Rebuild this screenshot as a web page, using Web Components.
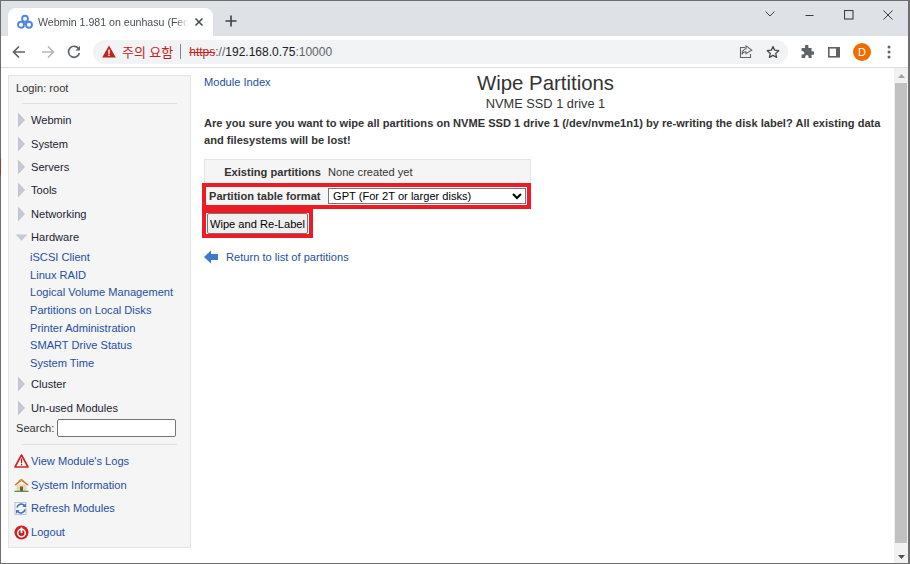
<!DOCTYPE html>
<html><head><meta charset="utf-8"><style>
html,body{margin:0;padding:0;height:100%;overflow:hidden;background:#fff;font-family:"Liberation Sans",Arial,sans-serif}
</style></head><body>
<wm-window>
  <wm-chrome slot="chrome"></wm-chrome>
  <wm-sidebar slot="side"></wm-sidebar>
  <wm-main slot="main"></wm-main>
  <wm-scrollbar slot="bar"></wm-scrollbar>
</wm-window>
<script>
function def(name,html){customElements.define(name,class extends HTMLElement{constructor(){super();this.attachShadow({mode:'open'}).innerHTML=html}})}
def('wm-window',`<style>
:host{display:flex;flex-direction:column;width:910px;height:564px;box-sizing:border-box;border:1px solid #6e6e6e;border-width:1px 2px 1px 1px;background:#fff;position:relative}
:host::before{content:"";position:absolute;left:-1px;top:157px;width:1px;height:17px;background:#a03a3a}
.body{flex:1;display:flex;min-height:0}
::slotted([slot=side]){margin:7px 0 14px 7px}
::slotted([slot=main]){flex:1}
</style><slot name="chrome"></slot><div class="body"><slot name="side"></slot><slot name="main"></slot><slot name="bar"></slot></div>`);

def('wm-chrome',`<style>
:host{display:block;font-family:"Liberation Sans",Arial,"Noto Sans CJK KR",sans-serif;color:#5f6368}
.strip{height:35px;background:#dee1e6;display:flex;position:relative}
.tab{margin:7px 0 0 7px;width:205px;height:28px;background:#fff;border-radius:8px 8px 0 0;display:flex;align-items:center;box-sizing:border-box;padding-left:9px;font-size:10.6px;color:#4a4e53}
.tab .t{width:150px;flex:none;margin-left:5px;white-space:nowrap;-webkit-mask-image:linear-gradient(90deg,#000 92%,transparent)}
.tab svg.x{margin-left:6px}
.plus{margin:14px 0 0 12px}
.win{margin-left:auto;display:flex;align-items:flex-start;padding-top:7px}
.win svg{display:block}
.tool{height:31px;background:#fff;display:flex;align-items:center;border-bottom:1px solid #dadce0;box-sizing:content-box}
.nav{display:flex;align-items:center;gap:14px;padding-left:11px;width:92px;box-sizing:border-box;flex:none}
.nav svg:last-child{margin-left:-2px}
.omni{width:695px;flex:none;height:24px;background:#f1f3f4;border-radius:12px;display:flex;align-items:center;box-sizing:border-box;padding-left:9px;font-size:12px;white-space:nowrap}
.warn{color:#c5221f;font-family:"Noto Sans CJK KR",sans-serif;font-size:13px;margin-left:6px;letter-spacing:.1px}
.sep{width:1px;height:15px;background:#80868b;margin:0 8px 0 7px}
.s{color:#c5221f;text-decoration:line-through}
.h{color:#202124}
.g{color:#5f6368}
.rt{display:flex;align-items:center;gap:12px;padding-left:12px}
.right{display:flex;align-items:center;flex:1}
.av{width:18px;height:18px;border-radius:50%;background:#ef6c00;color:#fff;font-size:11px;display:flex;align-items:center;justify-content:center}
</style>
<div class="strip">
 <div class="tab">
  <svg width="16" height="16" viewBox="0 0 16 16" fill="none" stroke="#4f86e0" stroke-width="1.900"><circle cx="8" cy="4.700" r="2.900"/><circle cx="4" cy="10.800" r="3"/><circle cx="12" cy="10.800" r="3"/><path d="M8 7.500v3" stroke-width="1.300"/></svg>
  <div class="t">Webmin 1.981 on eunhasu (Fed</div>
  <svg class="x" width="10" height="10" viewBox="0 0 10 10" stroke="#45494e" stroke-width="1.500"><path d="M1.500 1.500l7 7M8.500 1.500l-7 7"/></svg>
 </div>
 <svg class="plus" width="12" height="12" viewBox="0 0 12 12" stroke="#3c4043" stroke-width="1.600"><path d="M6 .5v11M.5 6h11"/></svg>
 <div class="win">
  <svg width="12" height="10" viewBox="0 0 12 10" fill="none" stroke="#3c4043" style="margin:1px 0 0 0"><path d="M1.500 2.500L6 7l4.500-4.500"/></svg>
  <svg width="10" height="10" viewBox="0 0 10 10" stroke="#3c4043" style="margin:2px 0 0 29px"><path d="M.5 5.500h8"/></svg>
  <svg width="10" height="10" viewBox="0 0 10 10" fill="none" stroke="#3c4043" style="margin:2px 0 0 29px"><rect x=".5" y=".5" width="8.500" height="8.500" stroke-width="1.100"/></svg>
  <svg width="10" height="10" viewBox="0 0 10 10" stroke="#3c4043" style="margin:2px 15px 0 29px"><path d="M.5.5l9 9M9.500.5l-9 9"/></svg>
 </div>
</div>
<div class="tool">
 <div class="nav">
  <svg width="14" height="14" viewBox="0 0 14 14" fill="none" stroke="#5f6368" stroke-width="1.700"><path d="M13 7H2M7 1.500L1.500 7 7 12.500"/></svg>
  <svg width="14" height="14" viewBox="0 0 14 14" fill="none" stroke="#b6b8bb" stroke-width="1.700" style="margin-left:1px"><path d="M1 7h11M7 1.500L12.500 7 7 12.500"/></svg>
  <svg width="14" height="14" viewBox="0 0 14 14" fill="none" stroke="#5f6368" stroke-width="1.700"><path d="M11.900 4.200A5.500 5.500 0 1 0 12.400 8"/><path d="M13 1v4.600H8.400" fill="#5f6368" stroke="none"/></svg>
 </div>
 <div class="right">
 <div class="omni">
  <svg width="14" height="13" viewBox="0 0 14 13"><path d="M7 .5L13.800 12.500H.2z" fill="#c5221f"/><path d="M6.300 4.500h1.400v4.300H6.300zM6.300 9.600h1.400v1.400H6.300z" fill="#fff"/></svg>
  <span class="warn">주의 요함</span><span class="sep"></span>
  <span><span class="s">https</span><span class="g">://</span><span class="h">192.168.0.75</span><span class="g">:10000</span></span>
  <span style="margin-left:auto;display:flex;gap:13px;align-items:center;padding-right:8px">
   <svg width="14" height="14" viewBox="0 0 14 14" fill="none" stroke="#5f6368" stroke-width="1.100"><path d="M6 2.500H1.500v10h10V9"/><path d="M7 .9l5.800 4.200L7 8.600V6.800C5 6.800 3.800 7.500 3 9.300 3.200 6.500 4.600 4.400 7 3.800z" fill="#f1f3f4"/></svg>
   <svg width="14" height="14" viewBox="0 0 14 14" fill="none" stroke="#45494e" stroke-width="1.300" stroke-linejoin="round"><path d="M7 1.500l1.700 3.700 4 .5-3 2.700.9 4L7 10.400l-3.600 2 .9-4-3-2.700 4-.5z"/></svg>
  </span>
 </div>
 <div class="rt">
  <svg width="14" height="14" viewBox="0 0 14 14" fill="#5f6368"><path d="M5 1.200a1.700 1.700 0 0 1 3.400 0V3h3.200v3.200h1a1.800 1.800 0 0 1 0 3.600h-1V13H8.600v-1.200a1.700 1.700 0 0 0-3.400 0V13H1.600V9.600h1.100a1.700 1.700 0 0 0 0-3.400H1.600V3H5z"/></svg>
  <svg width="14" height="14" viewBox="0 0 14 14" fill="none" stroke="#5f6368" stroke-width="1.600" style="margin-left:1px"><rect x="1.800" y="2.800" width="10.400" height="9"/><path d="M9 3h3v9H9z" fill="#5f6368" stroke="none"/></svg>
  <div class="av">D</div>
  <svg width="4" height="14" viewBox="0 0 4 14" fill="#5f6368" style="margin:0 0 0 4px"><circle cx="2" cy="2" r="1.500"/><circle cx="2" cy="7" r="1.500"/><circle cx="2" cy="12" r="1.500"/></svg>
 </div>
 </div>
</div>`);

def('wm-side-cat',`<style>
:host{display:flex;align-items:center;height:23.4px;font-size:11.1px;color:#222233;white-space:nowrap}
.a{width:22px;display:flex;padding-left:9px;box-sizing:border-box;flex:none}
:host([open]) .a{padding-left:6px}
</style><div class="a"><slot name="i"></slot></div><slot></slot>`);
def('wm-side-link',`<style>
:host{display:block;height:17.7px;line-height:17.7px;padding-left:21px;font-size:11.1px;color:#1f4fa0;white-space:nowrap}
</style><slot></slot>`);
def('wm-side-act',`<style>
:host{display:flex;align-items:center;height:23.6px;font-size:11.1px;color:#1f4fa0;white-space:nowrap}
.i{width:22px;padding-left:5px;box-sizing:border-box;display:flex;flex:none}
</style><div class="i"><slot name="i"></slot></div><slot></slot>`);

const closed='<svg slot="i" width="7" height="14" viewBox="0 0 7 14"><path d="M.5.5L6.500 7 .5 13.500z" fill="#c6c8d6" stroke="#bcbecb" stroke-width=".8"/></svg>';
const opened='<svg slot="i" width="13" height="7" viewBox="0 0 13 7"><path d="M.5.5h12L6.500 6.800z" fill="#c6c8d6"/></svg>';
const cat=(t,o)=>`<wm-side-cat${o?' open':''}>${o?opened:closed}${t}</wm-side-cat>`;
const link=t=>`<wm-side-link>${t}</wm-side-link>`;
def('wm-sidebar',`<style>
:host{display:block;width:183px;box-sizing:border-box;background:#f5f5f5;border:1px solid #e4e4e4;padding:5px 0 0 0;font-size:11.1px;color:#333;flex:none;height:473px}
.login{padding-left:7px;height:15px;line-height:15px}
hr{border:0;height:1px;background:#e0e0e0;margin:7px 13px 4.500px 13px}
hr.b{margin:6px 13px 4px}
.links{margin:0}
.search{display:flex;align-items:center;padding-left:7px;height:20px;margin-top:-1px}
input{width:119px;height:18px;box-sizing:border-box;margin-left:3px;border:1px solid #767676;border-radius:2px;background:#fff;padding:0}
</style>
<div class="login">Login: root</div><hr>
${cat('Webmin')}${cat('System')}${cat('Servers')}${cat('Tools')}${cat('Networking')}${cat('Hardware',1)}
<div class="links">
${link('iSCSI Client')}${link('Linux RAID')}${link('Logical Volume Management')}${link('Partitions on Local Disks')}${link('Printer Administration')}${link('SMART Drive Status')}${link('System Time')}
</div>
${cat('Cluster')}${cat('Un-used Modules')}
<div class="search">Search:<input></div>
<hr class="b">
<wm-side-act><svg slot="i" width="15" height="14" viewBox="0 0 15 14"><path d="M7.500 1L14 13H1z" fill="#fff" stroke="#d42020" stroke-width="1.600" stroke-linejoin="round"/><path d="M6.800 4.500h1.400v4.800H6.800zM6.800 10h1.400v1.400H6.800z" fill="#8a3030"/></svg>View Module's Logs</wm-side-act>
<wm-side-act><svg slot="i" width="15" height="14" viewBox="0 0 15 14"><path d="M2.500 6.500h10V13h-10z" fill="#e6d8b8"/><path d="M6 8.500h3V13H6z" fill="#7a5a30"/><path d="M.3 7L7.500 .7 14.700 7l-1.300.6L7.500 3 1.600 7.600z" fill="#c07a2a"/><path d="M4 2.500L7.500 .7 11 3.500 7.500 3z" fill="#d8963e"/><path d="M.5 12.700h14V14H.5z" fill="#4d9a3a"/></svg>System Information</wm-side-act>
<wm-side-act><svg slot="i" width="14" height="15" viewBox="0 0 14 15" fill="none"><rect x="1" y="1.500" width="11" height="12" stroke="#a9c2e2" stroke-width=".9"/><path d="M3 6.500A4.200 4.200 0 0 1 10.300 4.500" stroke="#3f6fb0" stroke-width="1.600"/><path d="M8.300 5.800l3.700.2-.2-3.800z" fill="#3f6fb0"/><path d="M11 8.500A4.200 4.200 0 0 1 3.700 10.500" stroke="#3f6fb0" stroke-width="1.600"/><path d="M5.700 9.200L2 9l.2 3.800z" fill="#3f6fb0"/></svg>Refresh Modules</wm-side-act>
<wm-side-act><svg slot="i" width="15" height="15" viewBox="0 0 15 15"><circle cx="7.500" cy="7.500" r="7" fill="#cf1f1f"/><circle cx="7.500" cy="8" r="3.800" fill="none" stroke="#fff" stroke-width="1.500"/><path d="M6.600 2.500h1.800v5.500H6.600z" fill="#fff"/></svg>Logout</wm-side-act>
`);

def('wm-main',`<style>
:host{display:block;font-size:11.1px;color:#333;padding:3px 9px 0 13px;box-sizing:border-box;min-width:0}
a{color:#1f4fa0}
.head{display:grid;grid-template-columns:1fr auto 1fr;align-items:start}
.head a{margin-top:5px}
.title{text-align:center;margin-left:2px}
h1{margin:0;font-weight:400;font-size:20.4px;line-height:24px;color:#333}
h2{margin:2px 0 0;font-weight:400;font-size:12.8px;line-height:14px;color:#333}
.msg{margin:4px 0 0;font-weight:700;line-height:17px}
.tbl{margin-top:10px;width:327px;box-sizing:border-box;border:1px solid #e4e4e4;border-bottom:0;background:#f5f5f5;white-space:nowrap}
.r{display:flex;align-items:center}
.r1{height:23px}
.r1 b{width:116px;text-align:right;flex:none}
.r1 span{margin-left:7px}
.r2{height:26px;border:4px solid #ed1c24;margin-left:-3px;box-sizing:border-box;width:329px}
.r2 b{margin-left:3px;flex:none;width:115px}
select{margin-left:4px;width:198px;height:16px;box-sizing:border-box;font:11.1px "Liberation Sans",Arial,sans-serif;color:#000;background:#fff;border:1px solid #767676;border-radius:0;padding:0}
.btnbox{display:flex;margin:0 0 0 -2px;border:4px solid #ed1c24;box-sizing:border-box;height:29px;width:111px;align-items:center;padding:0 0 0 1px}
button{width:101px;height:21px;padding:0;font:11.1px "Liberation Sans",Arial,sans-serif;color:#000;background:#efefef;border:1px solid #767676;border-radius:2px;box-sizing:border-box;white-space:nowrap}
.ret{display:flex;align-items:center;margin-top:11px;color:#1f4fa0;height:16px}
.ret svg{margin-right:8px;flex:none}
</style>
<div class="head"><a>Module Index</a><div class="title"><h1>Wipe Partitions</h1><h2>NVME SSD 1 drive 1</h2></div><span></span></div>
<p class="msg">Are you sure you want to wipe all partitions on NVME SSD 1 drive 1 (/dev/nvme1n1) by re-writing the disk label? All existing data and filesystems will be lost!</p>
<div class="tbl">
 <div class="r r1"><b>Existing partitions</b><span>None created yet</span></div>
 <div class="r r2"><b>Partition table format</b><select><option>GPT (For 2T or larger disks)</option></select></div>
</div>
<div class="btnbox"><button>Wipe and Re-Label</button></div>
<div class="ret"><svg width="14" height="14" viewBox="0 0 14 14"><path d="M0 7L7 .5V4h7v6H7v3.500z" fill="#3f79c9"/></svg>Return to list of partitions</div>
`);

def('wm-scrollbar',`<style>
:host{display:flex;flex-direction:column;width:14px;flex:none;background:#f1f1f1}
.b{height:15px;display:flex;align-items:center;justify-content:center;flex:none}
.b.d{height:20px;padding-top:8px;box-sizing:border-box}
.t{flex:1;background:#c1c1c1;margin:0 1px}
</style><div class="b"><svg width="7" height="4" viewBox="0 0 7 4"><path d="M3.500 0L7 4H0z" fill="#a3a3a3"/></svg></div><div class="t"></div><div class="b d"><svg width="7" height="4" viewBox="0 0 7 4"><path d="M0 0h7L3.500 4z" fill="#505050"/></svg></div>`);
</script>
</body></html>
